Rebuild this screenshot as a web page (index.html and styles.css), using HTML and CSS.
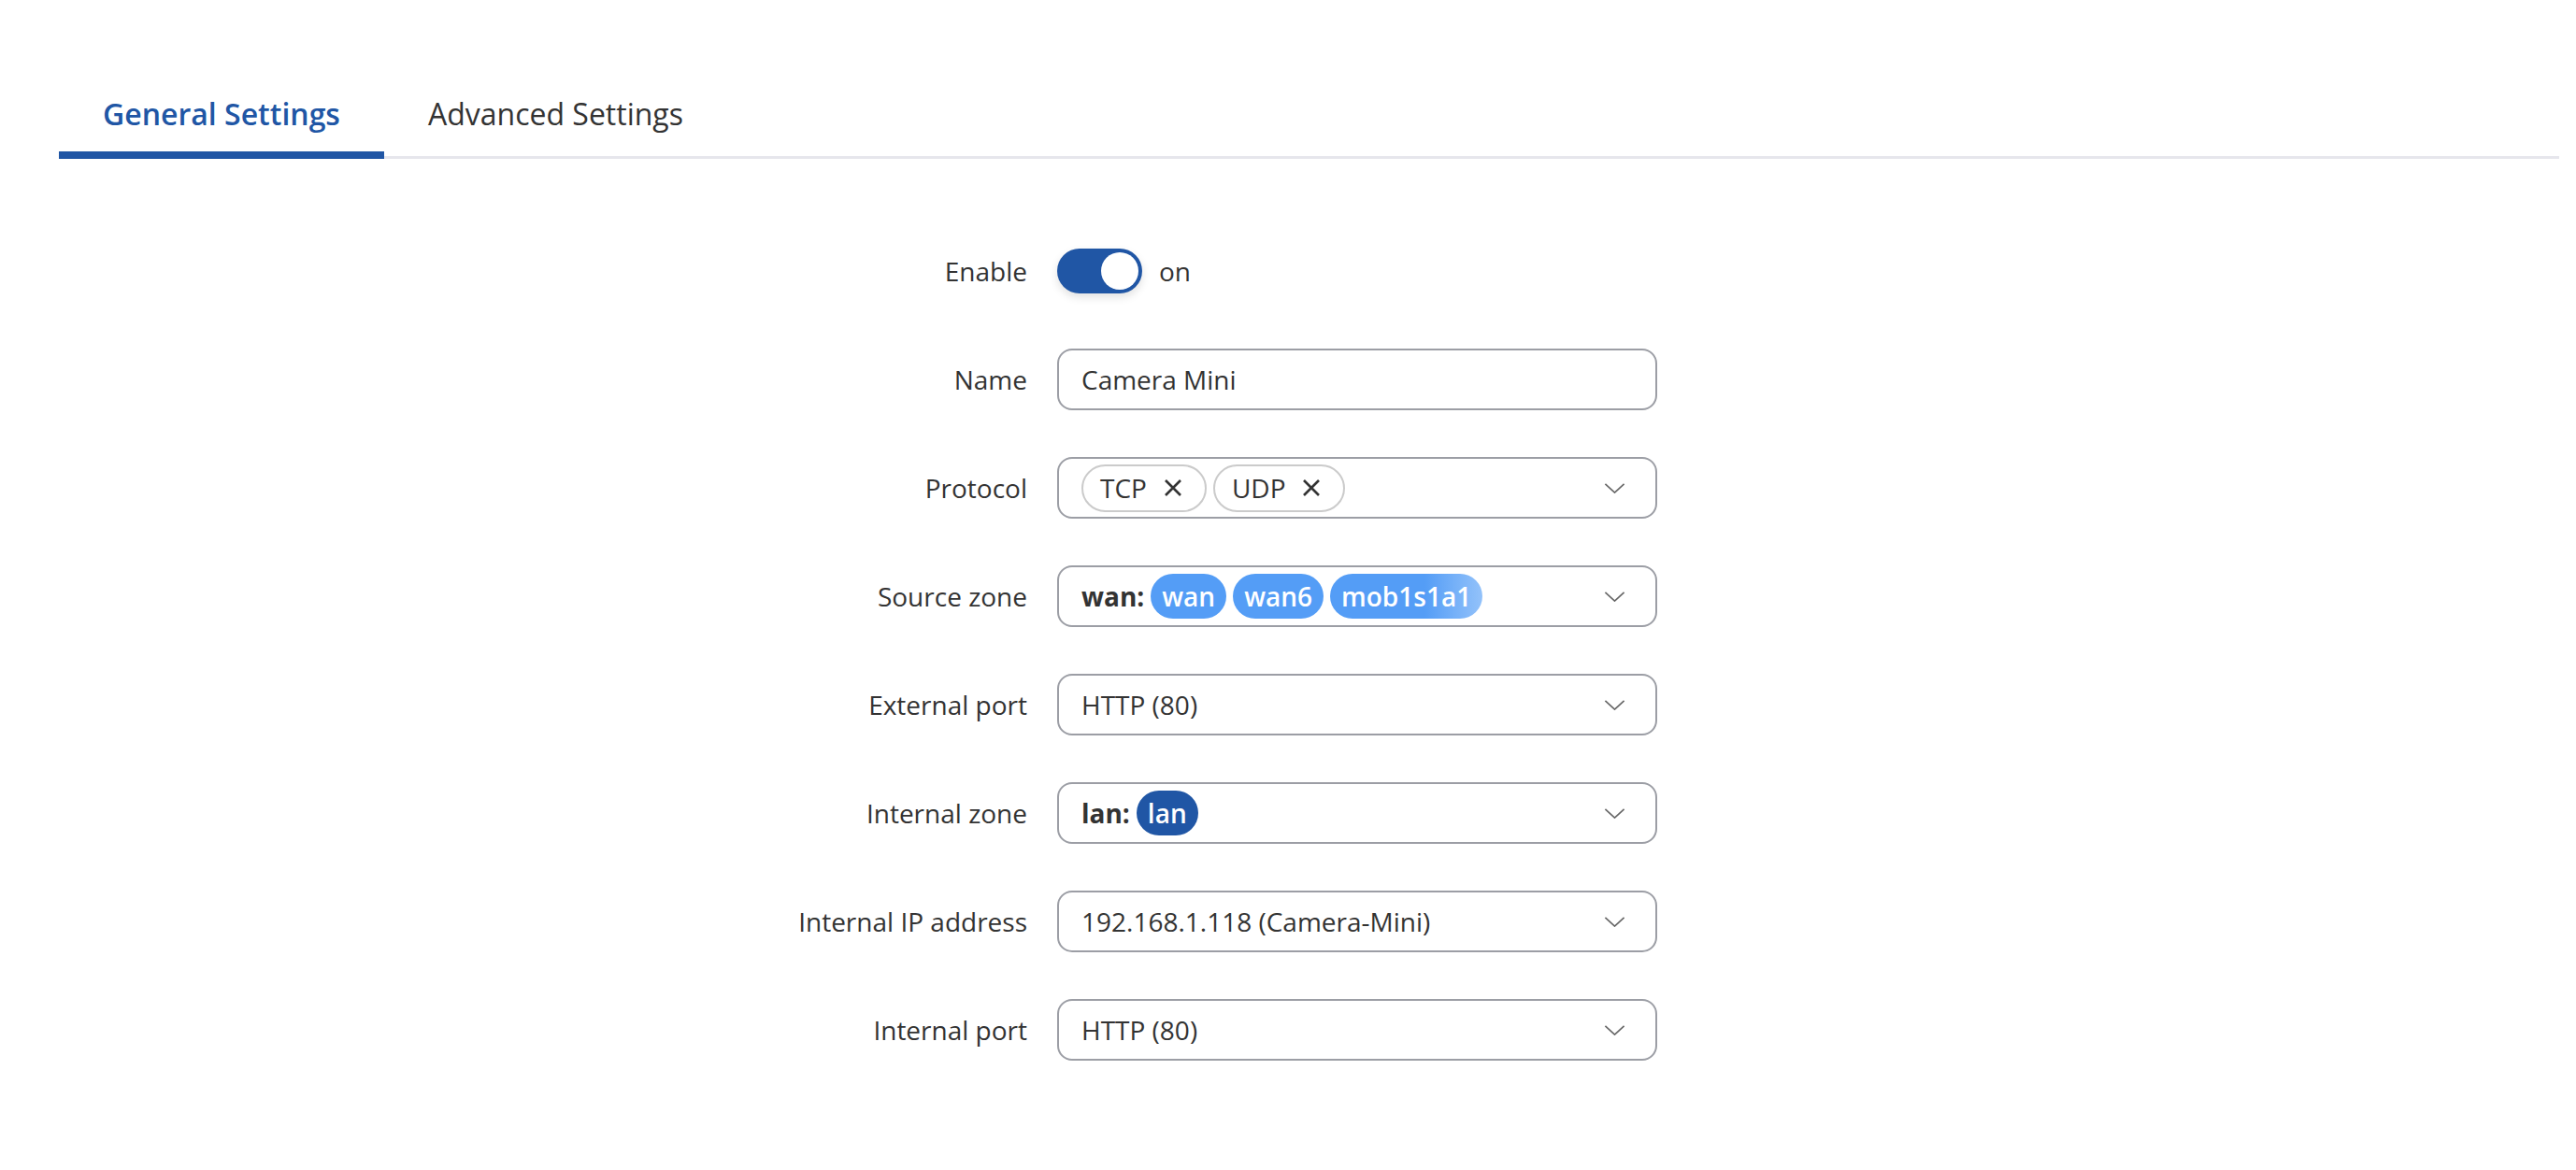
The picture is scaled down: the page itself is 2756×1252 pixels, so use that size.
FILE: index.html
```html
<!DOCTYPE html>
<html lang="en">
<head>
    <meta charset="UTF-8">
    <meta name="viewport" content="width=device-width, initial-scale=1.0">
    <title>Port Forward - General Settings</title>
    <link rel="stylesheet" href="styles.css">
</head>
<body>
    <nav class="tabs">
        <a class="tab active" href="#">General Settings</a>
        <a class="tab" href="#">Advanced Settings</a>
    </nav>

    <form class="settings">
        <div class="row">
            <label class="label">Enable</label>
            <div class="control">
                <span class="toggle on"><span class="knob"></span></span>
                <span class="toggle-text">on</span>
            </div>
        </div>

        <div class="row">
            <label class="label" for="name">Name</label>
            <div class="field">
                <input class="text-input" id="name" type="text" value="Camera Mini">
            </div>
        </div>

        <div class="row">
            <label class="label">Protocol</label>
            <div class="field select">
                <span class="tag">TCP
                    <svg class="tag-x" viewBox="0 0 20 20"><path d="M2 2 L18 18 M18 2 L2 18"/></svg>
                </span>
                <span class="tag">UDP
                    <svg class="tag-x" viewBox="0 0 20 20"><path d="M2 2 L18 18 M18 2 L2 18"/></svg>
                </span>
                <svg class="chevron" viewBox="0 0 24 12"><polyline points="1,1 12,11 23,1"/></svg>
            </div>
        </div>

        <div class="row">
            <label class="label">Source zone</label>
            <div class="field select">
                <b class="zone">wan:</b>
                <span class="pill light">wan</span>
                <span class="pill light">wan6</span>
                <span class="pill light fade">mob1s1a1</span>
                <svg class="chevron" viewBox="0 0 24 12"><polyline points="1,1 12,11 23,1"/></svg>
            </div>
        </div>

        <div class="row">
            <label class="label">External port</label>
            <div class="field select">
                <span class="value">HTTP (80)</span>
                <svg class="chevron" viewBox="0 0 24 12"><polyline points="1,1 12,11 23,1"/></svg>
            </div>
        </div>

        <div class="row">
            <label class="label">Internal zone</label>
            <div class="field select">
                <b class="zone">lan:</b>
                <span class="pill dark">lan</span>
                <svg class="chevron" viewBox="0 0 24 12"><polyline points="1,1 12,11 23,1"/></svg>
            </div>
        </div>

        <div class="row">
            <label class="label">Internal IP address</label>
            <div class="field select">
                <span class="value">192.168.1.118 (Camera-Mini)</span>
                <svg class="chevron" viewBox="0 0 24 12"><polyline points="1,1 12,11 23,1"/></svg>
            </div>
        </div>

        <div class="row">
            <label class="label">Internal port</label>
            <div class="field select">
                <span class="value">HTTP (80)</span>
                <svg class="chevron" viewBox="0 0 24 12"><polyline points="1,1 12,11 23,1"/></svg>
            </div>
        </div>
    </form>
</body>
</html>
```

FILE: styles.css
```css
* {
    margin: 0;
    padding: 0;
    box-sizing: border-box;
    font-family: 'Open Sans', 'Noto Sans', sans-serif;
}

body {
    background: #fff;
    color: #333;
}

/* tabs */
.tabs {
    display: flex;
    margin: 0 18px 0 63px;
    padding-top: 100px;
    border-bottom: 3px solid #e6e6ec;
}

.tab {
    display: block;
    padding: 0 47px 18px;
    margin-bottom: -3px;
    border-bottom: 8px solid transparent;
    font-size: 32px;
    line-height: 44px;
    color: #333;
    text-decoration: none;
}

.tab.active {
    color: #2056a5;
    font-weight: 600;
    border-bottom-color: #2056a5;
}

/* form */
.settings {
    display: grid;
    grid-template-columns: 299px 642px;
    column-gap: 32px;
    row-gap: 50px;
    padding: 87px 0 0 800px;
}

.row {
    display: contents;
}

.label {
    height: 66px;
    display: flex;
    align-items: center;
    justify-content: flex-end;
    font-size: 28px;
    color: #333;
    white-space: nowrap;
}

.control {
    height: 66px;
    display: flex;
    align-items: center;
    gap: 18px;
}

.toggle {
    position: relative;
    width: 91px;
    height: 48px;
    border-radius: 24px;
    background: #2056a5;
    box-shadow: 0 4px 10px rgba(0, 0, 0, 0.12);
}

.toggle .knob {
    position: absolute;
    top: 4px;
    right: 4px;
    width: 40px;
    height: 40px;
    border-radius: 50%;
    background: #fff;
}

.toggle-text {
    font-size: 28px;
    color: #333;
}

.field {
    height: 66px;
    border: 2px solid #9c9ea5;
    border-radius: 16px;
    display: flex;
    align-items: center;
    padding: 0 32px 0 24px;
    font-size: 28px;
    color: #333;
}

.text-input {
    width: 100%;
    border: none;
    outline: none;
    background: transparent;
    font-size: 28px;
    color: #333;
}

.select .chevron {
    margin-left: auto;
    width: 23px;
    height: 11px;
    fill: none;
    stroke: #666;
    stroke-width: 1.8;
    flex-shrink: 0;
}

.tag {
    display: flex;
    align-items: center;
    gap: 18px;
    height: 51px;
    padding: 0 24px 0 18px;
    margin-right: 7px;
    border: 2px solid #cbcbcb;
    border-radius: 26px;
    font-size: 28px;
}

.tag-x {
    width: 20px;
    height: 20px;
    stroke: #333;
    stroke-width: 2.6;
}

.zone {
    font-weight: 700;
    margin-right: 7px;
}

.pill {
    display: flex;
    align-items: center;
    height: 48px;
    padding: 0 12px;
    margin-right: 7px;
    border-radius: 24px;
    color: #fff;
    font-weight: 600;
}

.pill.light {
    background: #549df6;
}

.pill.fade {
    background: linear-gradient(90deg, #549df6 62%, #93c2fa 100%);
}

.pill.dark {
    background: #2056a5;
}
```
